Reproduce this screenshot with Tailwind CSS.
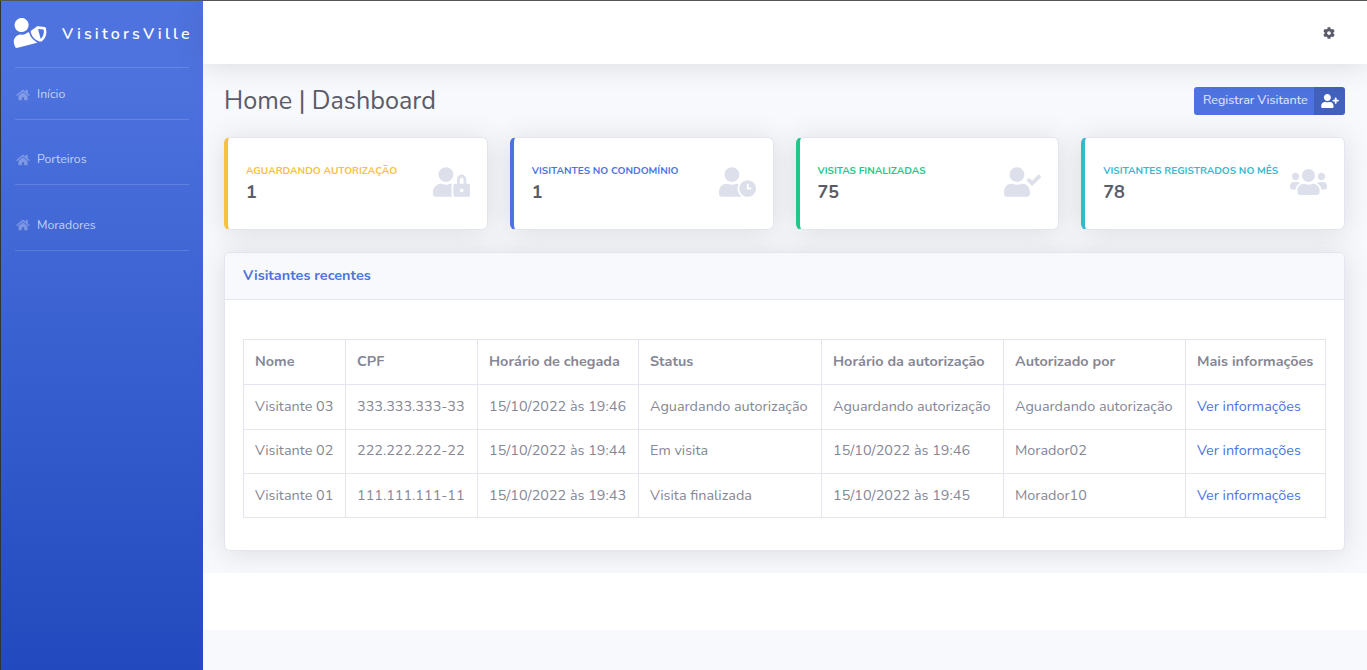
<!DOCTYPE html>
<html lang="pt-BR">
<head>
    <meta charset="UTF-8">
    <meta name="viewport" content="width=device-width, initial-scale=1.0">
    <title>VisitorsVille</title>
    <script src="https://cdn.jsdelivr.net/npm/@tailwindcss/browser@4"></script>
</head>
<body class="font-['Nunito','Lato','Liberation_Sans',sans-serif] bg-[#f8f9fc]">
    <svg class="hidden">
        <symbol id="home" viewBox="0 0 576 512"><path fill="currentColor" d="M280.37 148.26L96 300.11V464a16 16 0 0 0 16 16l112.06-.29a16 16 0 0 0 15.92-16V368a16 16 0 0 1 16-16h64a16 16 0 0 1 16 16v95.64a16 16 0 0 0 16 16.05L464 480a16 16 0 0 0 16-16V300L295.67 148.26a12.19 12.19 0 0 0-15.3 0zM571.6 251.47L488 182.56V44.05a12 12 0 0 0-12-12h-56a12 12 0 0 0-12 12v72.61L318.47 43a48 48 0 0 0-61 0L4.34 251.47a12 12 0 0 0-1.6 16.9l25.5 31A12 12 0 0 0 45.15 301l235.22-193.74a12.19 12.19 0 0 1 15.3 0L530.9 301a12 12 0 0 0 16.9-1.6l25.5-31a12 12 0 0 0-1.7-16.93z"/></symbol>
    </svg>
    <div class="flex h-[670px] overflow-hidden border-t border-[#555555]">
        <!-- Sidebar -->
        <aside class="w-[203px] shrink-0 border-l border-[#333333] bg-gradient-to-b from-[#4e73df] from-10% to-[#224abe] px-[14px]">
            <div class="flex h-[66px] items-center -mx-[14px] pl-[10px] pb-[7px]">
                <svg class="w-[35px] h-[29px] -rotate-15 text-white" viewBox="0 0 640 512"><path fill="currentColor" d="M622.3 271.1l-115.2-45c-4.1-1.6-12.6-3.7-22.2 0l-115.2 45c-10.7 4.2-17.7 14-17.7 24.9 0 111.6 68.7 188.8 132.9 213.9 9.6 3.7 18 1.6 22.2 0C558.4 489.9 640 420.5 640 296c0-10.9-7-20.7-17.7-24.9zM496 462.4V273.3l95.5 37.3c-5.6 87.1-60.9 135.4-95.5 151.8zM224 256c70.7 0 128-57.3 128-128S294.7 0 224 0 96 57.3 96 128s57.3 128 128 128zm96 40c0-2.5.8-4.8 1.1-7.2-2.5-.1-4.9-.8-7.5-.8h-16.7c-22.2 10.2-46.9 16-72.9 16s-50.6-5.8-72.9-16h-16.7C60.2 288 0 348.2 0 422.4V464c0 26.5 21.5 48 48 48h352c6.8 0 13.3-1.5 19.2-4-54-42.9-99.2-116.7-99.2-212z"/></svg>
                <span class="ml-[16px] mt-[7px] text-white text-[16px] font-semibold tracking-[3.15px]">VisitorsVille</span>
            </div>
            <nav class="text-[12.24px] text-white/70">
                <div class="flex h-[53px] pt-[2px] items-center border-y border-white/15 gap-[7px] pl-px">
                    <svg class="w-[14px] h-[12px] text-white/30"><use href="#home"/></svg><span>Início</span>
                </div>
                <div class="flex h-[65px] pt-[15px] items-center border-b border-white/15 gap-[7px] pl-px">
                    <svg class="w-[14px] h-[12px] text-white/30"><use href="#home"/></svg><span>Porteiros</span>
                </div>
                <div class="flex h-[66px] pt-[15px] items-center border-b border-white/15 gap-[7px] pl-px">
                    <svg class="w-[14px] h-[12px] text-white/30"><use href="#home"/></svg><span>Moradores</span>
                </div>
            </nav>
        </aside>

        <div class="flex-1 min-w-0 flex flex-col">
            <!-- Topbar -->
            <header class="h-[63px] shrink-0 bg-white shadow-[0_2px_28px_rgba(58,59,69,0.15)] flex items-center justify-end pr-[32px] relative">
                <svg class="w-[12px] h-[12px] text-[#5a5c69]" viewBox="0 0 512 512"><path fill="currentColor" d="M487.4 315.7l-42.6-24.6c4.3-23.2 4.3-47 0-70.2l42.6-24.6c4.9-2.8 7.1-8.6 5.5-14-11.1-35.6-30-67.8-54.7-94.6-3.8-4.1-10-5.1-14.8-2.3L380.8 110c-17.9-15.4-38.5-27.3-60.8-35.1V25.8c0-5.6-3.9-10.5-9.4-11.7-36.7-8.2-74.3-7.8-109.2 0-5.5 1.2-9.4 6.1-9.4 11.7V75c-22.2 7.9-42.8 19.8-60.8 35.1L88.7 85.5c-4.9-2.8-11-1.9-14.8 2.3-24.7 26.7-43.6 58.9-54.7 94.6-1.7 5.4.6 11.2 5.5 14L67.3 221c-4.3 23.2-4.3 47 0 70.2l-42.6 24.6c-4.9 2.8-7.1 8.6-5.5 14 11.1 35.6 30 67.8 54.7 94.6 3.8 4.1 10 5.1 14.8 2.3l42.6-24.6c17.9 15.4 38.5 27.3 60.8 35.1v49.2c0 5.6 3.9 10.5 9.4 11.7 36.7 8.2 74.3 7.8 109.2 0 5.5-1.2 9.4-6.1 9.4-11.7v-49.2c22.2-7.9 42.8-19.8 60.8-35.1l42.6 24.6c4.9 2.8 11 1.9 14.8-2.3 24.7-26.7 43.6-58.9 54.7-94.6 1.5-5.5-.7-11.3-5.6-14.1zM256 336c-44.1 0-80-35.9-80-80s35.9-80 80-80 80 35.9 80 80-35.9 80-80 80z"/></svg>
            </header>

            <!-- Content -->
            <main class="h-[509px] shrink-0 pr-[22px] pl-[21px] pt-[23px]">
                <div class="flex items-center justify-between h-[28px]">
                    <h1 class="text-[25.2px] text-[#5a5c69] pt-[2px]">Home | Dashboard</h1>
                    <a class="flex h-[28px] rounded-[3px] overflow-hidden bg-[#4e73df] text-white/85 text-[12.6px]">
                        <span class="flex items-center w-[120px] pl-[9px] pb-[2px]">Registrar Visitante</span>
                        <span class="flex items-center justify-center w-[31px] bg-black/15">
                            <svg class="w-[18px] h-[14px] text-white" viewBox="0 0 640 512"><path fill="currentColor" d="M624 208h-64v-64c0-8.8-7.2-16-16-16h-32c-8.8 0-16 7.2-16 16v64h-64c-8.8 0-16 7.2-16 16v32c0 8.8 7.2 16 16 16h64v64c0 8.8 7.2 16 16 16h32c8.8 0 16-7.2 16-16v-64h64c8.8 0 16-7.2 16-16v-32c0-8.8-7.2-16-16-16zm-400 48c70.7 0 128-57.3 128-128S294.7 0 224 0 96 57.3 96 128s57.3 128 128 128zm89.6 32h-16.7c-22.2 10.2-46.9 16-72.9 16s-50.6-5.8-72.9-16h-16.7C60.2 288 0 348.2 0 422.4V464c0 26.5 21.5 48 48 48h352c26.5 0 48-21.5 48-48v-41.6c0-74.2-60.2-134.4-134.4-134.4z"/></svg>
                        </span>
                    </a>
                </div>

                <!-- Stat cards -->
                <div class="grid grid-cols-4 gap-[22px] mt-[22px]">
                    <div class="h-[93px] bg-white rounded-[6px] border border-[#e3e6f0] border-l-4 border-l-[#f6c23e] shadow-[0_2px_28px_rgba(58,59,69,0.15)] flex items-center justify-between pl-[18px] pr-[17px]">
                        <div>
                            <div class="text-[10.08px] font-bold text-[#f6c23e] uppercase leading-[16px] whitespace-nowrap">Aguardando autorização</div>
                            <div class="text-[18px] font-bold text-[#5a5c69] leading-[26px]">1</div>
                        </div>
                        <svg class="w-[37px] h-[30px] mb-[4px] text-[#dddfeb]" viewBox="0 0 640 512"><path fill="currentColor" d="M224 256A128 128 0 1 0 96 128a128 128 0 0 0 128 128zm96 64a63.08 63.08 0 0 1 8.1-30.5c-4.8-.5-9.5-1.5-14.5-1.5h-16.7a174.08 174.08 0 0 1-145.8 0h-16.7A134.43 134.43 0 0 0 0 422.4V464a48 48 0 0 0 48 48h280.9a63.54 63.54 0 0 1-8.9-32zm288-32h-32v-80a80 80 0 0 0-160 0v80h-32a32 32 0 0 0-32 32v160a32 32 0 0 0 32 32h224a32 32 0 0 0 32-32V320a32 32 0 0 0-32-32zM496 432a32 32 0 1 1 32-32 32 32 0 0 1-32 32zm32-144h-64v-80a32 32 0 0 1 64 0z"/></svg>
                    </div>
                    <div class="h-[93px] bg-white rounded-[6px] border border-[#e3e6f0] border-l-4 border-l-[#4e73df] shadow-[0_2px_28px_rgba(58,59,69,0.15)] flex items-center justify-between pl-[18px] pr-[17px]">
                        <div>
                            <div class="text-[10.08px] font-bold text-[#4e73df] uppercase leading-[16px] whitespace-nowrap">Visitantes no condomínio</div>
                            <div class="text-[18px] font-bold text-[#5a5c69] leading-[26px]">1</div>
                        </div>
                        <svg class="w-[37px] h-[30px] mb-[4px] text-[#dddfeb]" viewBox="0 0 640 512"><path fill="currentColor" d="M496 224c-79.6 0-144 64.4-144 144s64.4 144 144 144 144-64.4 144-144-64.4-144-144-144zm64 150.3c0 5.3-4.4 9.7-9.7 9.7h-60.6c-5.3 0-9.7-4.4-9.7-9.7v-76.6c0-5.3 4.4-9.7 9.7-9.7h12.6c5.3 0 9.7 4.4 9.7 9.7V352h38.3c5.3 0 9.7 4.4 9.7 9.7v12.6zM320 368c0-27.8 6.7-54.1 18.2-77.5-8-1.5-16.2-2.5-24.6-2.5h-16.7c-22.2 10.2-46.9 16-72.9 16s-50.6-5.8-72.9-16h-16.7C60.2 288 0 348.2 0 422.4V464c0 26.5 21.5 48 48 48h347.1c-45.3-31.9-75.1-84.5-75.1-144zm-96-112c70.7 0 128-57.3 128-128S294.7 0 224 0 96 57.3 96 128s57.3 128 128 128z"/></svg>
                    </div>
                    <div class="h-[93px] bg-white rounded-[6px] border border-[#e3e6f0] border-l-4 border-l-[#1cc88a] shadow-[0_2px_28px_rgba(58,59,69,0.15)] flex items-center justify-between pl-[18px] pr-[17px]">
                        <div>
                            <div class="text-[10.08px] font-bold text-[#1cc88a] uppercase leading-[16px] whitespace-nowrap">Visitas finalizadas</div>
                            <div class="text-[18px] font-bold text-[#5a5c69] leading-[26px]">75</div>
                        </div>
                        <svg class="w-[37px] h-[30px] mb-[4px] text-[#dddfeb]" viewBox="0 0 640 512"><path fill="currentColor" d="M224 256c70.7 0 128-57.3 128-128S294.7 0 224 0 96 57.3 96 128s57.3 128 128 128zm89.6 32h-16.7c-22.2 10.2-46.9 16-72.9 16s-50.6-5.8-72.9-16h-16.7C60.2 288 0 348.2 0 422.4V464c0 26.5 21.5 48 48 48h352c26.5 0 48-21.5 48-48v-41.6c0-74.2-60.2-134.4-134.4-134.4zm323-128.4l-27.8-28.1c-4.6-4.7-12.1-4.7-16.8-.1l-104.8 104-45.5-45.8c-4.6-4.7-12.1-4.7-16.8-.1l-28.1 27.9c-4.7 4.6-4.7 12.1-.1 16.8l81.7 82.3c4.6 4.7 12.1 4.7 16.8.1l141.3-140.2c4.6-4.7 4.7-12.2.1-16.8z"/></svg>
                    </div>
                    <div class="h-[93px] bg-white rounded-[6px] border border-[#e3e6f0] border-l-4 border-l-[#36b9cc] shadow-[0_2px_28px_rgba(58,59,69,0.15)] flex items-center justify-between pl-[18px] pr-[17px]">
                        <div>
                            <div class="text-[10.08px] font-bold text-[#36b9cc] uppercase leading-[16px] whitespace-nowrap">Visitantes registrados no mês</div>
                            <div class="text-[18px] font-bold text-[#5a5c69] leading-[26px]">78</div>
                        </div>
                        <svg class="w-[37px] h-[30px] mb-[4px] text-[#dddfeb]" viewBox="0 0 640 512"><path fill="currentColor" d="M96 224c35.3 0 64-28.7 64-64s-28.7-64-64-64-64 28.7-64 64 28.7 64 64 64zm448 0c35.3 0 64-28.7 64-64s-28.7-64-64-64-64 28.7-64 64 28.7 64 64 64zm32 32h-64c-17.6 0-33.5 7.1-45.1 18.6 40.3 22.1 68.9 62 75.1 109.4h66c17.7 0 32-14.3 32-32v-32c0-35.3-28.7-64-64-64zm-256 0c61.9 0 112-50.1 112-112S381.9 32 320 32 208 82.1 208 144s50.1 112 112 112zm76.8 32h-8.3c-20.8 10-43.9 16-68.5 16s-47.6-6-68.5-16h-8.3C179.6 288 128 339.6 128 403.2V432c0 26.5 21.5 48 48 48h288c26.5 0 48-21.5 48-48v-28.8c0-63.6-51.6-115.2-115.2-115.2zm-223.7-13.4C161.5 263.1 145.6 256 128 256H64c-35.3 0-64 28.7-64 64v32c0 17.7 14.3 32 32 32h65.9c6.3-47.4 34.9-87.3 75.2-109.4z"/></svg>
                    </div>
                </div>

                <!-- Recent visitors -->
                <section class="mt-[22px] h-[299px] bg-white rounded-[6px] border border-[#e3e6f0] shadow-[0_2px_28px_rgba(58,59,69,0.15)] overflow-hidden">
                    <div class="h-[47px] bg-[#f8f9fc] border-b border-[#e3e6f0] flex items-center pl-[18px] text-[14.4px] font-bold text-[#4e73df]">Visitantes recentes</div>
                    <div class="pl-[18px] pt-[39px]">
                        <table class="table-fixed w-[1082px] border-collapse text-[14.4px] text-[#858796]">
                            <colgroup>
                                <col class="w-[102px]"><col class="w-[132px]"><col class="w-[161px]"><col class="w-[183px]"><col class="w-[182px]"><col class="w-[182px]"><col class="w-[140px]">
                            </colgroup>
                            <thead>
                                <tr class="h-[45px] text-left">
                                    <th class="border border-[#e3e6f0] pl-[11px] font-bold">Nome</th>
                                    <th class="border border-[#e3e6f0] pl-[11px] font-bold">CPF</th>
                                    <th class="border border-[#e3e6f0] pl-[11px] font-bold">Horário de chegada</th>
                                    <th class="border border-[#e3e6f0] pl-[11px] font-bold">Status</th>
                                    <th class="border border-[#e3e6f0] pl-[11px] font-bold">Horário da autorização</th>
                                    <th class="border border-[#e3e6f0] pl-[11px] font-bold">Autorizado por</th>
                                    <th class="border border-[#e3e6f0] pl-[11px] font-bold">Mais informações</th>
                                </tr>
                            </thead>
                            <tbody>
                                <tr class="h-[45px]">
                                    <td class="border border-[#e3e6f0] pl-[11px]">Visitante 03</td>
                                    <td class="border border-[#e3e6f0] pl-[11px]">333.333.333-33</td>
                                    <td class="border border-[#e3e6f0] pl-[11px]">15/10/2022 às 19:46</td>
                                    <td class="border border-[#e3e6f0] pl-[11px]">Aguardando autorização</td>
                                    <td class="border border-[#e3e6f0] pl-[11px]">Aguardando autorização</td>
                                    <td class="border border-[#e3e6f0] pl-[11px]">Aguardando autorização</td>
                                    <td class="border border-[#e3e6f0] pl-[11px] text-[#4e73df]">Ver informações</td>
                                </tr>
                                <tr class="h-[44px]">
                                    <td class="border border-[#e3e6f0] pl-[11px] pb-[2px]">Visitante 02</td>
                                    <td class="border border-[#e3e6f0] pl-[11px] pb-[2px]">222.222.222-22</td>
                                    <td class="border border-[#e3e6f0] pl-[11px] pb-[2px]">15/10/2022 às 19:44</td>
                                    <td class="border border-[#e3e6f0] pl-[11px] pb-[2px]">Em visita</td>
                                    <td class="border border-[#e3e6f0] pl-[11px] pb-[2px]">15/10/2022 às 19:46</td>
                                    <td class="border border-[#e3e6f0] pl-[11px] pb-[2px]">Morador02</td>
                                    <td class="border border-[#e3e6f0] pl-[11px] pb-[2px] text-[#4e73df]">Ver informações</td>
                                </tr>
                                <tr class="h-[44px]">
                                    <td class="border border-[#e3e6f0] pl-[11px]">Visitante 01</td>
                                    <td class="border border-[#e3e6f0] pl-[11px]">111.111.111-11</td>
                                    <td class="border border-[#e3e6f0] pl-[11px]">15/10/2022 às 19:43</td>
                                    <td class="border border-[#e3e6f0] pl-[11px]">Visita finalizada</td>
                                    <td class="border border-[#e3e6f0] pl-[11px]">15/10/2022 às 19:45</td>
                                    <td class="border border-[#e3e6f0] pl-[11px]">Morador10</td>
                                    <td class="border border-[#e3e6f0] pl-[11px] text-[#4e73df]">Ver informações</td>
                                </tr>
                            </tbody>
                        </table>
                    </div>
                </section>
            </main>

            <!-- Footer -->
            <footer class="h-[57px] shrink-0 bg-white"></footer>
        </div>
    </div>
</body>
</html>
